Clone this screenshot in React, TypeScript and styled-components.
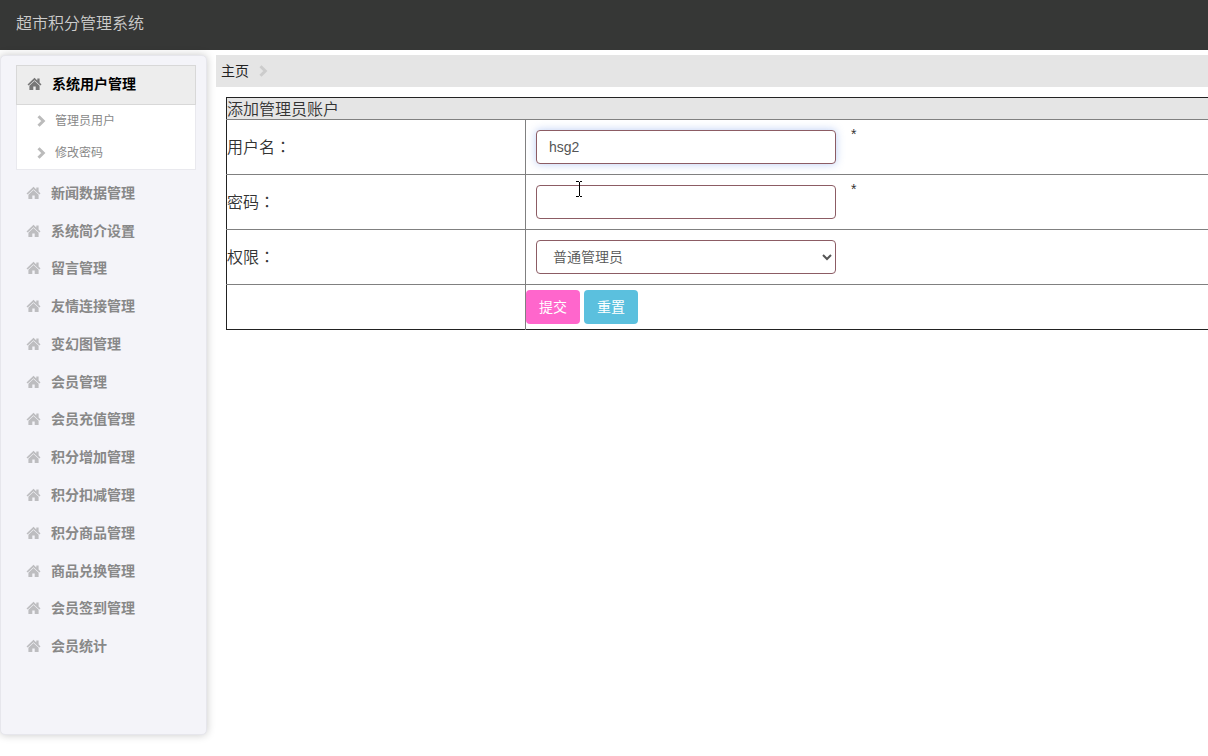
import React from "react";
import styled, { createGlobalStyle, css } from "styled-components";

const GlobalStyle = createGlobalStyle`
  *, *::before, *::after { box-sizing: border-box; }
  body {
    margin: 0;
    min-height: 100vh;
    background: #fff;
    color: #333;
    font-family: "Liberation Sans", "Noto Sans CJK SC", sans-serif;
    font-size: 14px;
    line-height: 20px;
  }
  ul { list-style: none; margin: 0; padding: 0; }
  a { color: inherit; text-decoration: none; }
`;

const TopBar = styled.header`
  display: flex;
  align-items: center;
  height: 50px;
  padding: 0 16px 2px;
  background: #363736;
`;

const Brand = styled.a`
  && { color: #ccc; }
  font-size: 16px;
  font-weight: 350;
  line-height: 24px;
`;

const Layout = styled.div`
  display: flex;
  align-items: flex-start;
  gap: 9px;
  padding: 5px 0 20px;
`;

const Sidebar = styled.nav`
  flex: 0 0 207px;
  padding: 9px 10px 69px 15px;
  background: #f4f4f9;
  border: 1px solid #e6e6ec;
  border-radius: 5px;
  box-shadow: 0 0 8px rgba(0, 0, 0, 0.22);
  font-size: 14px;
`;

const HomeSvg = styled.svg`
  flex: none;
  width: 15px;
  height: 14px;
  fill: currentColor;
`;

const ChevronSvg = styled.svg`
  flex: none;
  width: 11px;
  height: 12px;
  fill: none;
  stroke: currentColor;
  stroke-width: 3;
`;

const ActiveGroup = styled.section`
  background: #fff;
  border: 1px solid #e9e9ee;
  border-top: 0;
`;

const ActiveLink = styled.a`
  display: flex;
  align-items: center;
  gap: 10px;
  height: 40px;
  margin: 0 -1px;
  padding: 0 10px 2px;
  background: #ededed;
  border: 1px solid #d8d8d8;
  font-weight: 700;

  && { color: #000; }
  ${HomeSvg} { color: #777; }
`;

const SubLink = styled.a`
  display: flex;
  align-items: center;
  gap: 8px;
  height: 32px;
  padding-left: 19px;
  font-size: 12px;
  color: #888;

  ${ChevronSvg} { color: #bbb; }
`;

const MenuList = styled.ul`
  display: grid;
  grid-auto-rows: 1fr;
  min-height: 491px;
  margin-top: 4px;
`;

const MenuLink = styled.a`
  display: flex;
  align-items: center;
  gap: 10px;
  height: 100%;
  padding-left: 10px;
  font-weight: 700;
  color: #888;

  ${HomeSvg} { color: #bdbdc0; }
`;

const Main = styled.main`
  flex: 1 1 0;
  min-width: 0;
  overflow: hidden;
`;

const Breadcrumb = styled.div`
  display: flex;
  align-items: center;
  gap: 9px;
  height: 32px;
  padding-left: 5px;
  background: #e5e5e5;

  a { color: #222; }
  ${ChevronSvg} { color: #ccc; }
`;

const AccountForm = styled.form`
  margin: 10px 0 0 10px;
`;

const FormTable = styled.table`
  width: calc(100% + 20px);
  table-layout: fixed;
  border-collapse: collapse;
  border: 1px solid #222;
  font-size: 16px;
`;

const Caption = styled.th`
  height: 22px;
  padding: 2px 0 0;
  border-bottom: 1px solid #808080;
  background: #e5e5e5;
  font-weight: 350;
  line-height: 19px;
  text-align: left;
`;

const LabelCell = styled.th`
  width: 299px;
  padding: 0;
  border-top: 1px solid #808080;
  border-right: 1px solid #808080;
  font-weight: 350;
  text-align: left;
`;

const Colon = styled.span`
  font-family: "Noto Sans CJK TC", sans-serif;
`;

const FieldCell = styled.td<{ $height: number }>`
  height: ${(p) => p.$height}px;
  padding: 0;
  border-top: 1px solid #808080;
`;

const Field = styled.div`
  display: flex;
  align-items: flex-start;
  gap: 15px;
  padding: 0 10px;
`;

const control = css`
  width: 300px;
  height: 34px;
  border: 1px solid #8c5c64;
  border-radius: 4px;
  background: #fff;
  color: #555;
  font: 14px/20px "Liberation Sans", "Noto Sans CJK SC", sans-serif;
  outline: none;
`;

const TextInput = styled.input<{ $active?: boolean }>`
  ${control}
  padding: 6px 12px;
  ${(p) => p.$active && "box-shadow: 0 0 8px rgba(102, 145, 233, 0.45);"}
`;

const Select = styled.select`
  ${control}
  padding: 0 12px;
  font-weight: 350;
`;

const Required = styled.span`
  font-size: 14px;
  line-height: 8px;
`;

const Actions = styled.div`
  display: flex;
  gap: 4px;
`;

const Button = styled.button<{ $color: string }>`
  width: 54px;
  height: 34px;
  padding: 0;
  border: 0;
  border-radius: 4px;
  background: ${(p) => p.$color};
  color: #fff;
  font: 14px/20px "Liberation Sans", "Noto Sans CJK SC", sans-serif;
`;

const Pointer = styled.svg`
  position: absolute;
  left: 575px;
  top: 181px;
  pointer-events: none;
`;

const HomeIcon = () => (
  <HomeSvg viewBox="0 0 14 14" aria-hidden="true">
    <path d="M7 .8 0 7.4l1.2 1.2L7 3.3l5.8 5.3L14 7.4l-1.9-1.8V1.5H9.8v1.9z" />
    <path d="M7 4 1.9 8.7V13h3.9V9.6h2.4V13h3.9V8.7z" />
  </HomeSvg>
);

const Chevron = () => (
  <ChevronSvg viewBox="0 0 11 12" aria-hidden="true">
    <path d="M2.5 1.2 7.3 6l-4.8 4.8" />
  </ChevronSvg>
);

const subItems = ["管理员用户", "修改密码"];

const menuItems = [
  "新闻数据管理",
  "系统简介设置",
  "留言管理",
  "友情连接管理",
  "变幻图管理",
  "会员管理",
  "会员充值管理",
  "积分增加管理",
  "积分扣减管理",
  "积分商品管理",
  "商品兑换管理",
  "会员签到管理",
  "会员统计",
];

interface FormRowProps {
  id: string;
  label: string;
  required?: boolean;
  children: React.ReactNode;
}

const FormRow = ({ id, label, required, children }: FormRowProps) => (
  <tr>
    <LabelCell scope="row">
      <label htmlFor={id}>
        {label}
        <Colon>：</Colon>
      </label>
    </LabelCell>
    <FieldCell $height={55}>
      <Field>
        {children}
        {required && <Required>*</Required>}
      </Field>
    </FieldCell>
  </tr>
);

export default function App() {
  return (
    <>
      <GlobalStyle />
      <TopBar>
        <Brand href="#">超市积分管理系统</Brand>
      </TopBar>
      <Layout>
        <Sidebar>
          <ActiveGroup>
            <ActiveLink href="#">
              <HomeIcon />
              系统用户管理
            </ActiveLink>
            <ul>
              {subItems.map((item) => (
                <li key={item}>
                  <SubLink href="#">
                    <Chevron />
                    {item}
                  </SubLink>
                </li>
              ))}
            </ul>
          </ActiveGroup>
          <MenuList>
            {menuItems.map((item) => (
              <li key={item}>
                <MenuLink href="#">
                  <HomeIcon />
                  {item}
                </MenuLink>
              </li>
            ))}
          </MenuList>
        </Sidebar>
        <Main>
          <Breadcrumb>
            <a href="#">主页</a>
            <Chevron />
          </Breadcrumb>
          <AccountForm onSubmit={(e) => e.preventDefault()}>
            <FormTable>
              <colgroup>
                <col width={299} />
                <col />
              </colgroup>
              <thead>
                <tr>
                  <Caption colSpan={2}>添加管理员账户</Caption>
                </tr>
              </thead>
              <tbody>
                <FormRow id="username" label="用户名" required>
                  <TextInput id="username" type="text" defaultValue="hsg2" $active />
                </FormRow>
                <FormRow id="password" label="密码" required>
                  <TextInput id="password" type="password" />
                </FormRow>
                <FormRow id="role" label="权限">
                  <Select id="role">
                    <option>普通管理员</option>
                  </Select>
                </FormRow>
                <tr>
                  <LabelCell as="td" />
                  <FieldCell $height={45}>
                    <Actions>
                      <Button type="submit" $color="#ff66cc">提交</Button>
                      <Button type="reset" $color="#5bc0de">重置</Button>
                    </Actions>
                  </FieldCell>
                </tr>
              </tbody>
            </FormTable>
          </AccountForm>
        </Main>
      </Layout>
      <Pointer width="8" height="16" viewBox="0 0 8 16" aria-hidden="true">
        <path
          d="M1 .5h2.5l1 1 1-1H7M4.5 1v14M1 15.5h2.5l1-1 1 1H7"
          fill="none"
          stroke="#000"
          shapeRendering="crispEdges"
        />
      </Pointer>
    </>
  );
}
